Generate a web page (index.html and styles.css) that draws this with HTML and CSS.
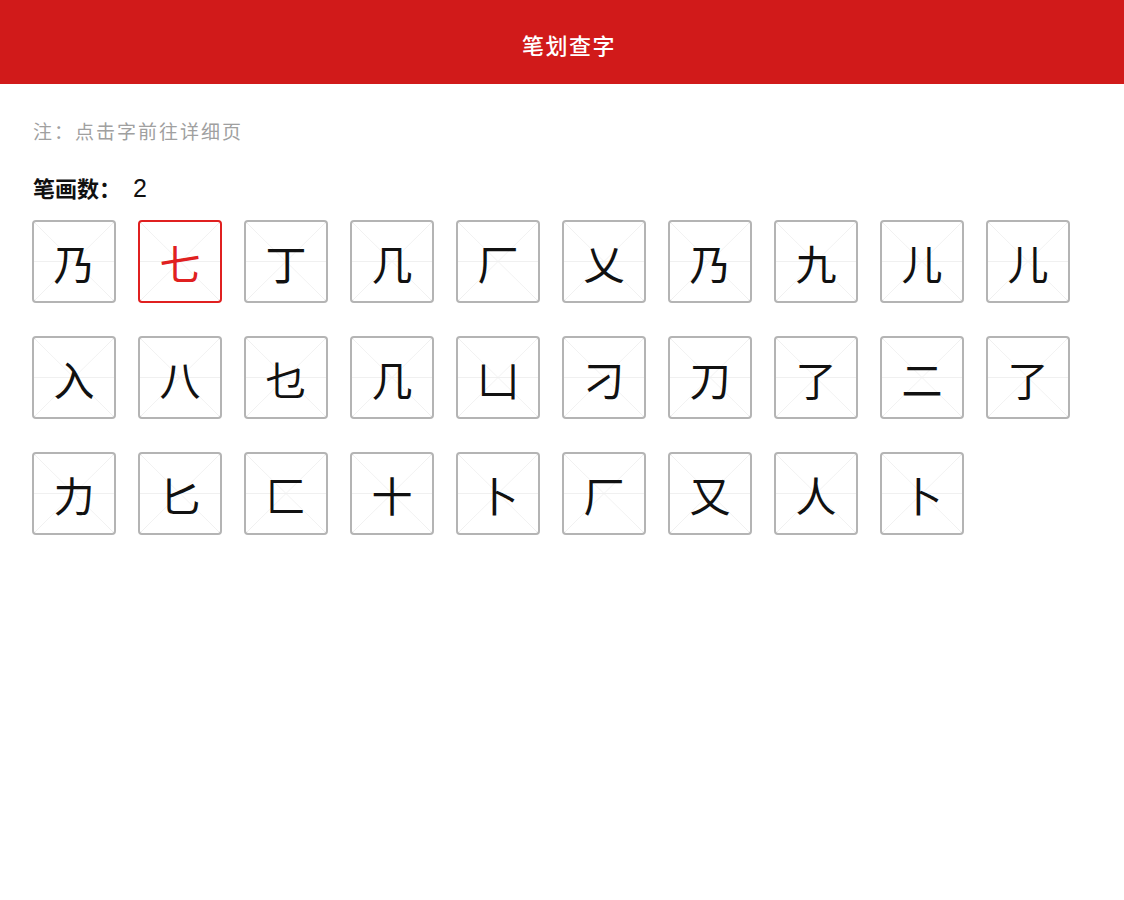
FILE: index.html
```html
<!DOCTYPE html>
<html lang="zh-CN">

<head>
    <meta charset="UTF-8">
    <title>笔划查字</title>
    <link rel="stylesheet" href="styles.css">
</head>

<body>

    <header class="top-bar"><span class="top-title">笔划查字</span></header>

    <main class="content">
        <p class="note">注：点击字前往详细页</p>
        <h3 class="stroke-title">笔画数：<span class="stroke-num">2</span></h3>
        <div class="char-grid" id="char-grid"></div>
    </main>

    <script>
        const chars = ['乃', '七', '丁', '几', '厂', '乂', '乃', '九', '儿', '儿',
            '入', '八', '乜', '几', '凵', '刁', '刀', '了', '二', '了',
            '力', '匕', '匚', '十', '卜', '厂', '又', '人', '卜'];
        const grid = document.getElementById('char-grid');
        chars.forEach((c, i) => {
            const cell = document.createElement('a');
            cell.className = 'char-cell' + (i === 1 ? ' active' : '');
            cell.textContent = c;
            grid.appendChild(cell);
        });
    </script>
</body>

</html>
```

FILE: styles.css
```css
body {
    margin: 0;
    font-family: "Noto Sans CJK SC", "Noto Sans", sans-serif;
    background: #fff;
}

.top-bar {
    height: 84px;
    background: #d11a1a;
    color: #fff;
    display: flex;
    justify-content: center;
    align-items: center;
    box-sizing: border-box;
    padding: 4px 0 0 14px;
}

.top-title {
    font-size: 22px;
    font-weight: 500;
    letter-spacing: 1.5px;
}

.content {
    padding: 35px 32px 0 33px;
}

.note {
    margin: 0;
    font-size: 19px;
    line-height: 24px;
    letter-spacing: 2px;
    color: #a0a0a0;
}

.stroke-title {
    margin: 31px 0 19px 0;
    font-size: 22px;
    line-height: 26px;
    font-weight: bold;
    color: #111;
}

.stroke-num {
    margin-left: 12px;
    font-size: 25px;
    font-weight: 500;
    font-family: "Liberation Sans", sans-serif;
}

.char-grid {
    display: grid;
    grid-template-columns: repeat(10, 84px);
    grid-auto-rows: 83px;
    column-gap: 22px;
    row-gap: 33px;
    margin-left: -1px;
}

.char-cell {
    display: flex;
    justify-content: center;
    align-items: center;
    border: 2px solid #b4b4b4;
    border-radius: 4px;
    font-size: 41px;
    font-weight: 400;
    color: #111;
    cursor: pointer;
    background:
        linear-gradient(to bottom right, transparent calc(50% - 0.6px), #efefef 50%, transparent calc(50% + 0.6px)),
        linear-gradient(to bottom left, transparent calc(50% - 0.6px), #efefef 50%, transparent calc(50% + 0.6px)),
        linear-gradient(to right, transparent calc(50% - 0.5px), #f0f0f0 50%, transparent calc(50% + 0.5px)),
        linear-gradient(to bottom, transparent calc(50% - 0.5px), #f0f0f0 50%, transparent calc(50% + 0.5px)),
        #fff;
}

.char-cell.active {
    border-color: #e02020;
    color: #e02020;
}
```
